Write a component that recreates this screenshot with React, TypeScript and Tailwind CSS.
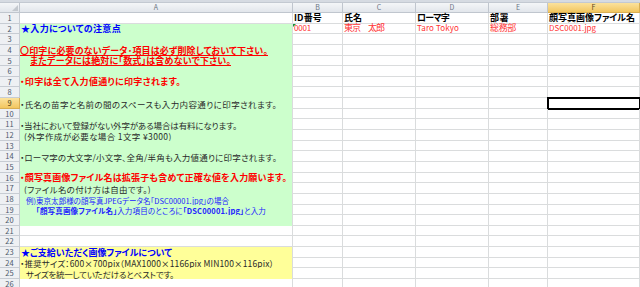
import React, { useLayoutEffect, useRef } from 'react';

type Fill = 'green' | 'yellow' | undefined;

type Row = {
  h: string;
  fill?: Fill;
  a?: React.ReactNode;
  rest?: React.ReactNode[];
};

// stretches or squeezes a line of text to the width it has in the sheet
function Fit({ w, className, children }: { w: number; className?: string; children: React.ReactNode }) {
  const ref = useRef<HTMLSpanElement>(null);

  useLayoutEffect(() => {
    const measure = () => {
      const el = ref.current;
      if (!el) return;
      el.style.letterSpacing = '0px';
      const natural = el.getBoundingClientRect().width;
      const n = (el.textContent || '').length || 1;
      el.style.letterSpacing = `${(w - natural) / n}px`;
    };
    measure();
    document.fonts?.ready.then(measure);
  }, [w]);

  return (
    <span ref={ref} className={`inline-block ${className ?? ''}`}>
      {children}
    </span>
  );
}

const RED_B = 'text-[#ff0000] font-bold text-[9px]';
const BLUE_B = 'text-[#0000ff] font-bold text-[9px]';
const DARK = 'text-[#2a2a2a] text-[8.5px]';
const HEAD = 'font-bold text-black text-[9px]';
const VAL = 'text-[#ff3333]';

const rows: Row[] = [
  {
    h: 'h-[11px]',
    rest: [
      <Fit w={28} className={HEAD}>ID番号</Fit>,
      <Fit w={18} className={HEAD}>氏名</Fit>,
      <Fit w={32} className={HEAD}>ローマ字</Fit>,
      <Fit w={19} className={HEAD}>部署</Fit>,
      <Fit w={86} className={HEAD}>顔写真画像ファイル名</Fit>,
    ],
  },
  {
    h: 'h-[10px]',
    fill: 'green',
    a: <Fit w={100} className={`${BLUE_B} ml-[1px]`}>★入力についての注意点</Fit>,
    rest: [
      <Fit w={17} className={`${VAL} text-[8px]`}>0001</Fit>,
      <Fit w={40} className={`${VAL} text-[9px]`}>東京　太郎</Fit>,
      <Fit w={42} className={`${VAL} text-[8px]`}>Taro Tokyo</Fit>,
      <Fit w={26} className={`${VAL} text-[9px]`}>総務部</Fit>,
      <Fit w={47} className={`${VAL} text-[8px]`}>DSC0001.jpg</Fit>,
    ],
  },
  { h: 'h-[11px]', fill: 'green' },
  {
    h: 'h-[11px]',
    fill: 'green',
    a: <Fit w={248} className={`${RED_B} underline`}>〇印字に必要のないデータ･項目は必ず削除しておいて下さい。</Fit>,
  },
  {
    h: 'h-[10px]',
    fill: 'green',
    a: <Fit w={201} className={`${RED_B} underline ml-[10px]`}>またデータには絶対に「数式」は含めないで下さい。</Fit>,
  },
  { h: 'h-[11px]', fill: 'green' },
  {
    h: 'h-[10px]',
    fill: 'green',
    a: <Fit w={161} className={RED_B}>・印字は全て入力値通りに印字されます。</Fit>,
  },
  { h: 'h-[11px]', fill: 'green' },
  {
    h: 'h-[11px]',
    fill: 'green',
    a: <Fit w={257} className={DARK}>・氏名の苗字と名前の間のスペースも入力内容通りに印字されます。</Fit>,
  },
  { h: 'h-[10px]', fill: 'green' },
  {
    h: 'h-[11px]',
    fill: 'green',
    a: <Fit w={217} className={DARK}>・当社において登録がない外字がある場合は有料になります。</Fit>,
  },
  {
    h: 'h-[11px]',
    fill: 'green',
    a: <Fit w={148} className={`${DARK} ml-[4px]`}>(外字作成が必要な場合  1文字 ¥3000)</Fit>,
  },
  { h: 'h-[10px]', fill: 'green' },
  {
    h: 'h-[11px]',
    fill: 'green',
    a: <Fit w={257} className={DARK}>・ローマ字の大文字/小文字、全角/半角も入力値通りに印字されます。</Fit>,
  },
  { h: 'h-[11px]', fill: 'green' },
  {
    h: 'h-[10px]',
    fill: 'green',
    a: <Fit w={267} className={RED_B}>・顔写真画像ファイル名は拡張子も含めて正確な値を入力願います。</Fit>,
  },
  {
    h: 'h-[11px]',
    fill: 'green',
    a: <Fit w={127} className={`${DARK} ml-[4px]`}>(ファイル名の付け方は自由です。)</Fit>,
  },
  {
    h: 'h-[11px]',
    fill: 'green',
    a: (
      <Fit w={203} className="text-[#2222ff] text-[7.5px] ml-[6px]">
        例)東京太郎様の顔写真JPEGデータ名「DSC00001.jpg」の場合
      </Fit>
    ),
  },
  {
    h: 'h-[10px]',
    fill: 'green',
    a: (
      <Fit w={230} className="text-[#2222ff] text-[7.5px] ml-[16px]">
        <b>「顔写真画像ファイル名」</b>入力項目のところに<b>「DSC00001.jpg」</b>と入力
      </Fit>
    ),
  },
  { h: 'h-[11px]', fill: 'green' },
  { h: 'h-[10px]' },
  { h: 'h-[11px]' },
  {
    h: 'h-[11px]',
    fill: 'yellow',
    a: <Fit w={151} className={`${BLUE_B} ml-[1px]`}>★ご支給いただく画像ファイルについて</Fit>,
  },
  {
    h: 'h-[10px]',
    fill: 'yellow',
    a: <Fit w={254} className={DARK}>・推奨サイズ：600×700pix（MAX1000×1166pix MIN100×116pix）</Fit>,
  },
  {
    h: 'h-[11px]',
    fill: 'yellow',
    a: <Fit w={148} className={`${DARK} ml-[6px]`}>サイズを統一していただけるとベストです。</Fit>,
  },
  { h: 'h-[11px]' },
];

const colW = ['w-[50px]', 'w-[73px]', 'w-[73px]', 'w-[59px]', 'w-[92px]'];
const letters = ['B', 'C', 'D', 'E', 'F'];

export default function App() {
  return (
    <div className="w-[640px] h-[287px] overflow-hidden bg-white font-['Noto_Sans_CJK_JP',sans-serif] [font-feature-settings:'palt'] leading-none">
      {/* top strip */}
      <div className="h-[3px] bg-[#d6dbe2] border-b border-[#c3c9d1]" />

      {/* column headers */}
      <div className="flex h-[10px]">
        <div className="w-[20px] relative bg-gradient-to-b from-[#f4f6f8] to-[#e2e6eb] border-r border-b border-[#c0c6ce]">
          <svg className="absolute right-[1px] bottom-[1px]" width="6" height="6" viewBox="0 0 6 6">
            <path d="M6 0 L6 6 L0 6 Z" fill="#c3c8ce" />
          </svg>
        </div>
        <div className="w-[273px] flex items-center justify-center text-[7px] text-[#6b7584] bg-gradient-to-b from-[#f4f6f8] to-[#e2e6eb] border-r border-b border-[#c0c6ce]">
          A
        </div>
        {letters.map((l, i) => (
          <div
            key={l}
            className={`${colW[i]} flex items-center justify-center text-[7px] border-r border-b ${
              l === 'F'
                ? 'bg-gradient-to-b from-[#fbe29c] to-[#f2c65e] text-[#5a4a20] border-[#d8ae52]'
                : 'bg-gradient-to-b from-[#f4f6f8] to-[#e2e6eb] text-[#6b7584] border-[#c0c6ce]'
            }`}
          >
            {l}
          </div>
        ))}
      </div>

      {/* body */}
      {rows.map((r, idx) => {
        const n = idx + 1;
        const sel = n === 9;
        const fillCls =
          r.fill === 'green' ? 'bg-[#ccffcc]' : r.fill === 'yellow' ? 'bg-[#ffff99]' : 'bg-white border-b border-[#dadcdd]';
        return (
          <div key={n} className={`flex ${r.h}`}>
            <div
              className={`w-[20px] flex items-center justify-center text-[7.5px] border-r border-b ${
                sel
                  ? 'bg-gradient-to-b from-[#fbe29c] to-[#f2c65e] text-[#4a3a10] border-[#d8ae52]'
                  : 'bg-[#eef0f3] text-[#4c596b] border-[#c7ccd3]'
              }`}
            >
              {n}
            </div>
            <div className={`w-[273px] flex items-end pb-[1px] whitespace-nowrap border-r border-r-[#dadcdd] ${fillCls}`}>
              {r.a}
            </div>
            {colW.map((w, i) => (
              <div
                key={i}
                className={`${w} relative flex items-end pl-[1px] pb-[1px] whitespace-nowrap border-r border-b border-[#dadcdd] ${
                  sel && i === 4 ? 'outline outline-2 outline-black -outline-offset-1' : ''
                }`}
              >
                {n === 2 && i === 0 && (
                  <svg className="absolute left-0 top-0" width="3" height="3" viewBox="0 0 3 3">
                    <path d="M0 0 L3 0 L0 3 Z" fill="#1e8f3a" />
                  </svg>
                )}
                {r.rest?.[i]}
              </div>
            ))}
          </div>
        );
      })}
    </div>
  );
}
